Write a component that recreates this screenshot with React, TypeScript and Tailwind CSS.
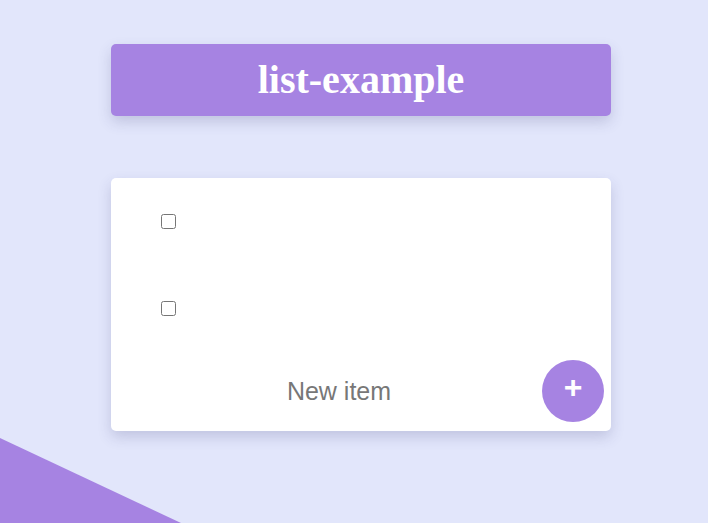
import React from "react";

export default function App() {
  const items = [0, 1];
  return (
    <div className="relative min-h-screen w-full overflow-hidden bg-[#e2e6fb] font-['Liberation_Sans',Arial,sans-serif]">
      {/* corner wedge */}
      <div className="absolute bottom-0 left-0 h-[85px] w-[181px] bg-[#a683e2] [clip-path:polygon(0_0,100%_100%,0_100%)]" />

      <div className="relative flex flex-col items-center pt-[44px] pl-[14px]">
        <div className="flex h-[72px] w-[500px] items-center justify-center rounded-[5px] bg-[#a683e2] shadow-[0_6px_14px_rgba(60,60,120,0.2)]">
          <h1 className="font-['Liberation_Serif','Times_New_Roman',serif] text-[40px] font-bold leading-none text-white">
            list-example
          </h1>
        </div>

        <div className="mt-[62px] flex w-[500px] flex-col rounded-[5px] bg-white shadow-[0_6px_14px_rgba(60,60,120,0.2)]">
          {items.map((i) => (
            <div key={i} className="flex h-[87px] items-center pl-[50px]">
              <input type="checkbox" className="m-0 h-[15px] w-[15px]" />
            </div>
          ))}
          <div className="relative flex h-[79px] items-center justify-center">
            <span className="mr-[44px] text-[25px] text-[#777777]">New item</span>
            <button className="absolute right-[7px] top-[8px] flex h-[62px] w-[62px] items-center justify-center rounded-full bg-[#a683e2] pb-[9px] text-[32px] font-bold leading-none text-white">
              +
            </button>
          </div>
        </div>
      </div>
    </div>
  );
}
